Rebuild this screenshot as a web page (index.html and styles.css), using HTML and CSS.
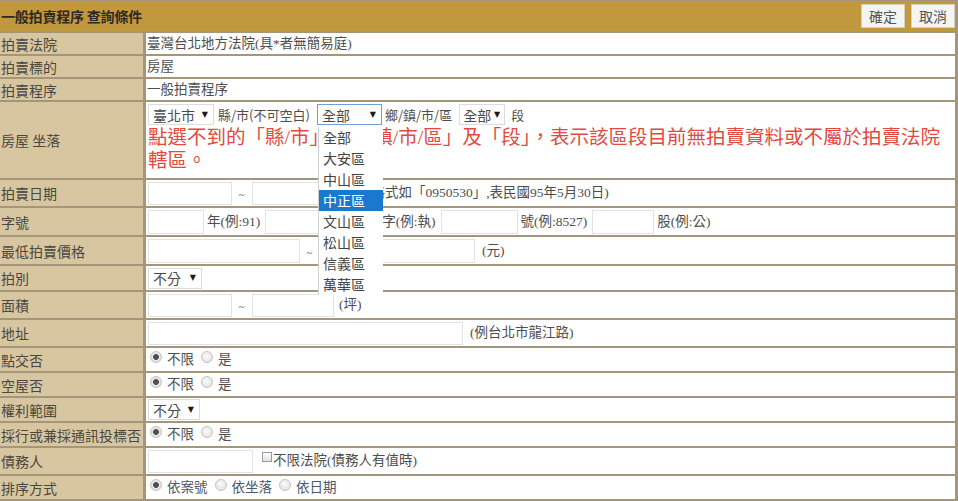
FILE: index.html
```html
<!DOCTYPE html>
<html lang="zh-Hant">
<head>
<meta charset="utf-8">
<title>一般拍賣程序 查詢條件</title>
<link rel="stylesheet" href="styles.css">
</head>
<body>
<div class="form">
  <div class="head">
    <span class="title">一般拍賣程序 查詢條件</span>
    <div class="btns"><button class="btn">確定</button><button class="btn">取消</button></div>
  </div>

  <div class="row r21"><div class="lab">拍賣法院</div><div class="val">臺灣台北地方法院(具*者無簡易庭)</div></div>
  <div class="row r21"><div class="lab">拍賣標的</div><div class="val">房屋</div></div>
  <div class="row r21"><div class="lab">拍賣程序</div><div class="val">一般拍賣程序</div></div>

  <div class="row r76"><div class="lab">房屋 坐落</div>
    <div class="val loc">
      <div class="loc-line">
        <span class="sel w65"><span>臺北市</span><span class="arr">▼</span></span>
        <span class="txt t1">縣/市(不可空白)</span>
        <span class="sel open w64"><span>全部</span><span class="arr">▼</span>
          <span class="dd-list">
            <span class="dd-item">全部</span>
            <span class="dd-item">大安區</span>
            <span class="dd-item">中山區</span>
            <span class="dd-item hl">中正區</span>
            <span class="dd-item">文山區</span>
            <span class="dd-item">松山區</span>
            <span class="dd-item">信義區</span>
            <span class="dd-item">萬華區</span>
          </span>
        </span>
        <span class="txt t2">鄉/鎮/市/區</span>
        <span class="sel w44"><span>全部</span><span class="arr">▼</span></span>
        <span class="txt t3">段</span>
      </div>
      <div class="warn">點選不到的「縣/市」、「鄉/鎮/市/區」及「段」，表示該區段目前無拍賣資料或不屬於拍賣法院轄區。</div>
    </div>
  </div>

  <div class="row r26"><div class="lab">拍賣日期</div>
    <div class="val"><input class="inp w84" type="text"><span class="tilde">~</span><input class="inp w115" type="text"><span class="txt">(格式如「0950530」,表民國95年5月30日)</span></div>
  </div>

  <div class="row r27"><div class="lab">字號</div>
    <div class="val"><input class="inp w56" type="text"><span class="txt gap">年(例:91)</span><input class="inp w114" type="text"><span class="txt gap">字(例:執)</span><input class="inp w77" type="text"><span class="txt gap">號(例:8527)</span><input class="inp w62" type="text"><span class="txt gap">股(例:公)</span></div>
  </div>

  <div class="row r27"><div class="lab">最低拍賣價格</div>
    <div class="val"><input class="inp w152" type="text"><span class="tilde">~</span><input class="inp w155" type="text"><span class="txt gap6">(元)</span></div>
  </div>

  <div class="row r24"><div class="lab">拍別</div>
    <div class="val"><span class="sel w54"><span>不分</span><span class="arr">▼</span></span></div>
  </div>

  <div class="row r26"><div class="lab">面積</div>
    <div class="val"><input class="inp w84" type="text"><span class="tilde">~</span><input class="inp w82" type="text"><span class="txt gap5">(坪)</span></div>
  </div>

  <div class="row r26"><div class="lab">地址</div>
    <div class="val"><input class="inp w315" type="text"><span class="txt gap6">(例台北市龍江路)</span></div>
  </div>

  <div class="row r23"><div class="lab">點交否</div>
    <div class="val"><span class="radio on"></span><span class="txt">不限</span><span class="radio"></span><span class="txt">是</span></div>
  </div>

  <div class="row r23"><div class="lab">空屋否</div>
    <div class="val"><span class="radio on"></span><span class="txt">不限</span><span class="radio"></span><span class="txt">是</span></div>
  </div>

  <div class="row r23"><div class="lab">權利範圍</div>
    <div class="val"><span class="sel w52"><span>不分</span><span class="arr">▼</span></span></div>
  </div>

  <div class="row r23"><div class="lab">採行或兼採通訊投標否</div>
    <div class="val"><span class="radio on"></span><span class="txt">不限</span><span class="radio"></span><span class="txt">是</span></div>
  </div>

  <div class="row r26"><div class="lab">債務人</div>
    <div class="val"><input class="inp w105" type="text"><span class="chk"></span><span class="txt">不限法院(債務人有值時)</span></div>
  </div>

  <div class="row r23"><div class="lab">排序方式</div>
    <div class="val sort"><span class="radio on"></span><span class="txt">依案號</span><span class="radio"></span><span class="txt">依坐落</span><span class="radio"></span><span class="txt">依日期</span></div>
  </div>
</div>
</body>
</html>
```

FILE: styles.css
```css
html, body {
  margin: 0;
  padding: 0;
}
body {
  width: 958px;
  height: 501px;
  overflow: hidden;
  background: #a3967b;
  font-family: "Liberation Serif", "Noto Sans CJK TC", serif;
}
.form {
  display: flex;
  flex-direction: column;
  gap: 2px;
  padding: 1px 3px 0 0;
}
.head {
  height: 30px;
  background: #c1983c;
  display: flex;
  align-items: center;
  justify-content: space-between;
  padding-left: 1px;
}
.title {
  font-family: "Noto Sans CJK TC", sans-serif;
  font-weight: bold;
  font-size: 14px;
  color: #2f2a20;
  letter-spacing: -0.2px;
}
.btns {
  display: flex;
  gap: 6px;
}
.btn {
  width: 44px;
  height: 24px;
  margin: 0;
  padding: 0;
  border: 1px solid #d9d0b8;
  background: #f4f4f2;
  font-family: "Noto Sans CJK TC", sans-serif;
  font-size: 14px;
  color: #555;
  line-height: 1;
}
.row {
  display: grid;
  grid-template-columns: 143px 1fr;
  column-gap: 3px;
}
.r21 { height: 21px; }
.r23 { height: 23px; }
.r24 { height: 24px; }
.r26 { height: 26px; }
.r27 { height: 27px; }
.r76 { height: 76px; }
.lab {
  background: #d8c6a0;
  display: flex;
  align-items: center;
  padding-left: 1px;
  font-family: "Noto Sans CJK TC", sans-serif;
  font-size: 14px;
  color: #4a4640;
  line-height: 1;
  white-space: nowrap;
}
.val {
  background: #fff;
  display: flex;
  align-items: center;
  padding-left: 1px;
  font-size: 13.5px;
  color: #4e4e4e;
  line-height: 1;
  white-space: nowrap;
}
.txt {
  display: inline-block;
}
.gap { margin: 0 4px 0 3px; }
.gap5 { margin-left: 5px; }
.gap6 { margin-left: 7px; }

.inp {
  box-sizing: border-box;
  height: 23px;
  margin: 0 0 0 1px;
  padding: 0;
  border: 1px solid #e3e3e3;
  background: #fff;
  outline: none;
}
.r26 .inp { height: 23px; margin-top: 1px; }
.r27 .inp { height: 24px; margin-top: 1px; }
.w56 { width: 56px; }
.w62 { width: 62px; }
.w77 { width: 77px; }
.w82 { width: 82px; }
.w84 { width: 84px; }
.w105 { width: 105px; }
.w114 { width: 114px; }
.w115 { width: 115px; }
.w152 { width: 152px; }
.w155 { width: 155px; }
.w315 { width: 315px; }

.tilde {
  width: 19px;
  text-align: center;
  font-size: 11px;
  padding-top: 3px;
  color: #555;
}

.sel {
  box-sizing: border-box;
  height: 21px;
  display: inline-flex;
  align-items: center;
  justify-content: space-between;
  padding: 0 5px 0 4px;
  margin-left: 1px;
  border: 1px solid #dcdcdc;
  background: #fff;
  font-family: "Noto Sans CJK TC", sans-serif;
  font-size: 14px;
  color: #4a4a4a;
}
.w44 { width: 46px; padding: 0 4px 0 3px; }
.w52 { width: 52px; }
.w54 { width: 54px; }
.w64 { width: 65px; }
.w65 { width: 66px; }
.arr {
  font-family: "DejaVu Sans", sans-serif;
  font-size: 8px;
  color: #1a1a1a;
}
.sel.open {
  position: relative;
  border-color: #6f9fd6;
  padding-right: 5px;
}
.dd-list {
  position: absolute;
  top: 22px;
  left: 0;
  width: 64px;
  display: flex;
  flex-direction: column;
  background: #fff;
  border-left: 1px solid #d0d0d0;
  z-index: 5;
}
.dd-item {
  height: 21px;
  line-height: 21px;
  padding-left: 4px;
  font-family: "Noto Sans CJK TC", sans-serif;
  font-size: 14px;
  color: #444;
}
.dd-item.hl {
  background: #1b78cf;
  color: #fff;
}

.loc {
  display: block;
  padding-top: 2px;
}
.loc-line {
  display: flex;
  align-items: center;
  height: 21px;
}
.t1 { margin: 0 6px 0 4px; font-family: "Noto Sans CJK TC", sans-serif; font-size: 13px; }
.t2 { margin: 0 6px 0 3px; font-family: "Noto Sans CJK TC", sans-serif; font-size: 13px; }
.t3 { margin-left: 6px; font-family: "Noto Sans CJK TC", sans-serif; font-size: 13px; }
.warn {
  margin-top: 1px;
  padding-left: 1px;
  font-family: "Liberation Serif", "Noto Sans CJK TC", serif;
  font-size: 19.5px;
  line-height: 23px;
  color: #e24a40;
  white-space: normal;
}

.radio {
  box-sizing: border-box;
  width: 12px;
  height: 12px;
  border-radius: 50%;
  border: 1px solid #c4c4c4;
  background: radial-gradient(circle at 45% 40%, #fbfbfb 0, #dcdcdc 100%);
  margin: 0 5px 5px 3px;
}
.radio.on {
  background: radial-gradient(circle, #505050 0 2.6px, #ececec 3.2px, #d4d4d4 100%);
}
.radio + .txt + .radio { margin-left: 7px; }
.sort .txt { color: #4b5869; }

.chk {
  box-sizing: border-box;
  width: 10px;
  height: 10px;
  border: 1px solid #9a9a9a;
  background: linear-gradient(#fdfdfd, #e2e2e2);
  margin: 0 1px 8px 9px;
}
```
